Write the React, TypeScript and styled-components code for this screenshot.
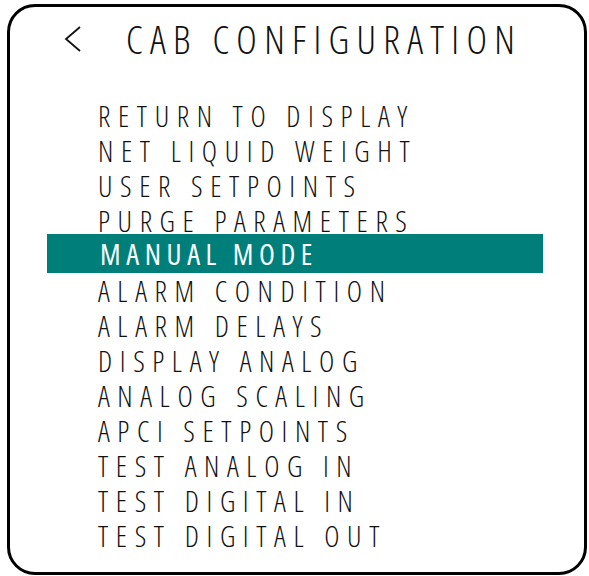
import React from "react";
import styled, { createGlobalStyle } from "styled-components";

const Global = createGlobalStyle`
  html, body { margin: 0; background: #fff; }
  body { font-family: "Open Sans", "DejaVu Sans", sans-serif; }
`;

const items = [
  "RETURN TO DISPLAY",
  "NET LIQUID WEIGHT",
  "USER SETPOINTS",
  "PURGE PARAMETERS",
  "MANUAL MODE",
  "ALARM CONDITION",
  "ALARM DELAYS",
  "DISPLAY ANALOG",
  "ANALOG SCALING",
  "APCI SETPOINTS",
  "TEST ANALOG IN",
  "TEST DIGITAL IN",
  "TEST DIGITAL OUT",
];

const selectedIndex = 4;

export default function App() {
  return (
    <>
      <Global />
      <SFrame>
        <SHeader>
          <SBack viewBox="0 0 18 26" aria-label="back">
            <polyline points="16,1 2,13 16,25" />
          </SBack>
          <STitle>CAB CONFIGURATION</STitle>
        </SHeader>
        <SMenu>
          {items.map((label, i) => (
            <SItem key={label} $selected={i === selectedIndex}>
              {label}
            </SItem>
          ))}
        </SMenu>
      </SFrame>
    </>
  );
}

const SFrame = styled.div`
  box-sizing: border-box;
  margin: 4px 2px 0 7px;
  height: 571px;
  border: 3px solid #000;
  border-radius: 28px;
  display: flex;
  flex-direction: column;
  overflow: hidden;
`;

const SHeader = styled.div`
  display: flex;
  align-items: center;
  height: 64px;
  padding-left: 54px;
`;

const SBack = styled.svg`
  width: 18px;
  height: 26px;
  fill: none;
  stroke: #111;
  stroke-width: 1.8;
  margin-right: 44px;
`;

const STitle = styled.h1`
  margin: 0;
  font-family: "Open Sans", sans-serif;
  font-stretch: 87.5%;
  font-weight: 300;
  font-size: 39px;
  letter-spacing: 7.3px;
  line-height: 40px;
  color: #111;
`;

const SMenu = styled.ul`
  list-style: none;
  margin: 27px 0 0 37px;
  padding: 0;
  width: 496px;
`;

const SItem = styled.li<{ $selected: boolean }>`
  font-family: "Open Sans", sans-serif;
  font-stretch: 87.5%;
  font-weight: ${(p) => (p.$selected ? 400 : 300)};
  font-size: 29px;
  letter-spacing: ${(p) => (p.$selected ? 5.6 : 7.6)}px;
  white-space: nowrap;
  height: ${(p) => (p.$selected ? 39 : 35)}px;
  line-height: ${(p) => (p.$selected ? 39 : 35)}px;
  margin-top: ${(p) => (p.$selected ? -4 : 0)}px;
  padding-left: ${(p) => (p.$selected ? 53 : 51)}px;
  background: ${(p) => (p.$selected ? "#007f7a" : "transparent")};
  color: ${(p) => (p.$selected ? "#fff" : "#111")};
`;
